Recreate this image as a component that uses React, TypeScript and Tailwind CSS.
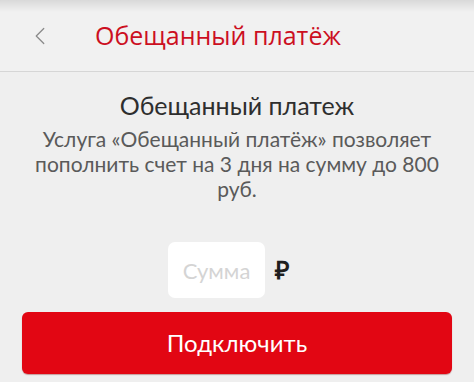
import { ChevronLeft } from "lucide-react";

export default function App() {
  return (
    <main className="h-[382px] w-[474px] overflow-hidden bg-[#efefef] font-['Lato','Open_Sans',sans-serif]">
      <header className="relative flex h-[72px] items-center border-b border-[#d6d6d6] bg-[#f1f1f1]">
        <div className="pointer-events-none absolute inset-x-0 top-0 h-[12px] bg-gradient-to-b from-[#d9d9d9] to-transparent" />
        <ChevronLeft className="ml-[25px] h-[30px] w-[30px] text-[#8a8a8a]" strokeWidth={1} />
        <h1 className="ml-[40px] font-['Open_Sans',sans-serif] text-[25px] leading-none text-[#cc0f1f]">Обещанный платёж</h1>
      </header>

      <section className="flex flex-col items-center px-4 pt-[18px] text-center">
        <h2 className="text-[25px] leading-[30px] text-[#2e2e2e]">Обещанный платеж</h2>
        <p className="mt-[6px] text-[21px] leading-[25px] text-[#5a5a5a]">
          Услуга «Обещанный платёж» позволяет
          <br />
          пополнить счет на 3 дня на сумму до 800
          <br />
          руб.
        </p>

        <div className="mt-[41px] flex items-center gap-[10px] pr-[16px]">
          <input
            placeholder="Сумма"
            className="h-[56px] w-[97px] rounded-[7px] bg-white text-center text-[22px] text-[#333] outline-none placeholder:text-[#d4d4d4]"
          />
          <span className="font-['Open_Sans',sans-serif] text-[25px] font-semibold text-[#1e1e1e]">₽</span>
        </div>
      </section>

      <div className="px-[22px] pt-[14px]">
        <button className="flex h-[62px] w-full items-center justify-center rounded-[6px] bg-[#e20613] text-[24px] text-white shadow-[0_1px_1px_rgba(120,0,0,0.35)]">
          Подключить
        </button>
      </div>
    </main>
  );
}
